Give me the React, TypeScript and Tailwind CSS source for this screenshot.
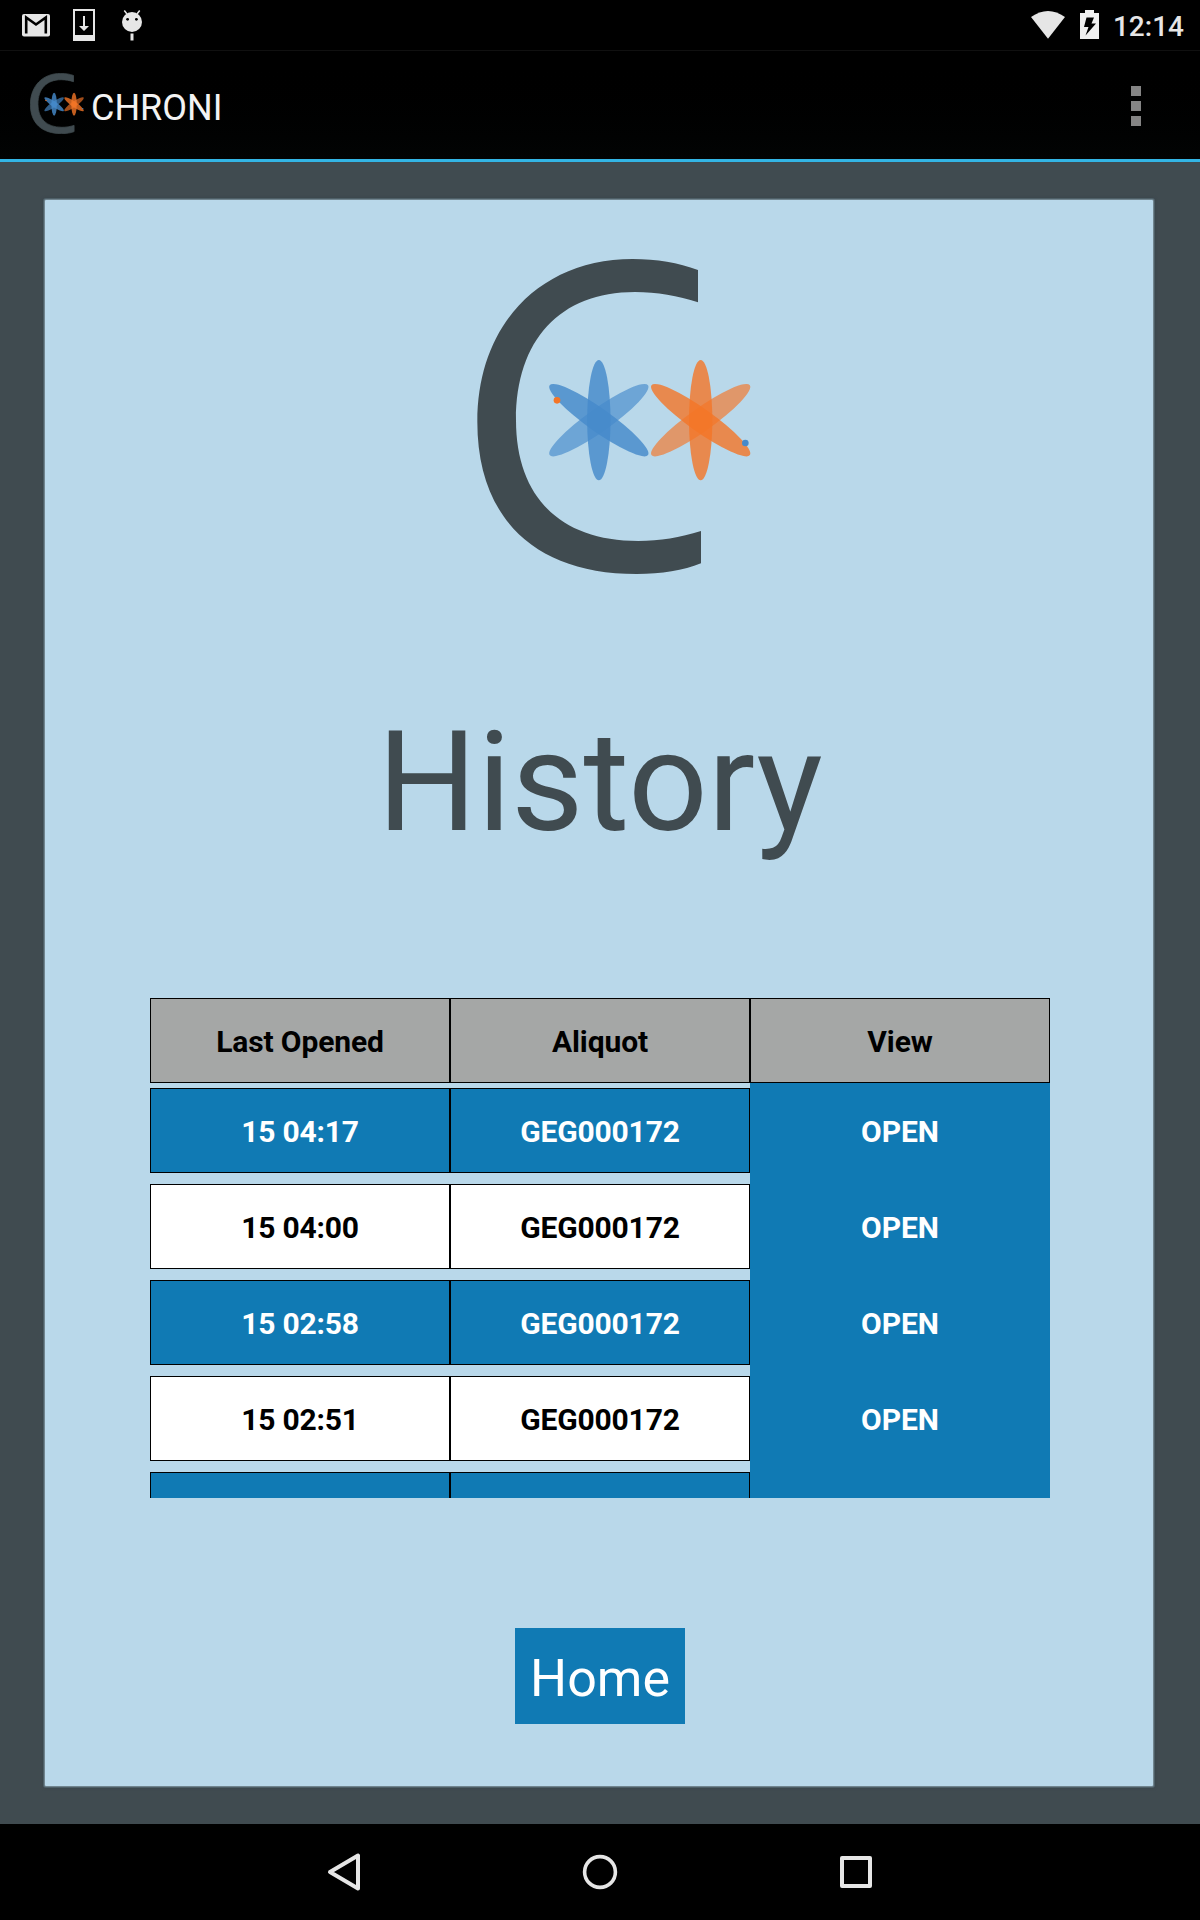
const rows = [
  { opened: "15 04:17", aliquot: "GEG000172" },
  { opened: "15 04:00", aliquot: "GEG000172" },
  { opened: "15 02:58", aliquot: "GEG000172" },
  { opened: "15 02:51", aliquot: "GEG000172" },
  { opened: "", aliquot: "" },
];

type FlowerProps = { cx: number; color: string; weak: number; strong: number; petal: number };

function Flower({ cx, color, weak, strong, petal }: FlowerProps) {
  return (
    <g fill={color}>
      <ellipse cx={cx} cy="540.5" rx="181" ry={petal} opacity={weak} transform={`rotate(-35.4 ${cx} 540.5)`} />
      <ellipse cx={cx} cy="540.5" rx="181" ry={petal} opacity={strong} transform={`rotate(35.4 ${cx} 540.5)`} />
      <ellipse cx={cx} cy="540.5" rx={petal} ry="180.5" opacity={strong} />
    </g>
  );
}

function Logo({ className, viewBox, bold = false }: { className: string; viewBox: string; bold?: boolean }) {
  const petal = bold ? 42 : 35;
  return (
    <svg className={className} viewBox={viewBox} preserveAspectRatio="none">
      <path
        fill="#404b50"
        stroke="#404b50"
        strokeWidth={bold ? 12 : 0}
        d="M714 90C655 68 590 57 518 57C240 57 52 255 52 545C52 835 225 1002 530 1002C605 1002 670 992 723 970V873C660 893 600 903 535 903C300 903 168 770 168 540C168 300 300 156 525 156C590 156 655 168 714 187Z"
      />
      <Flower cx={416.5} color="#468acb" weak={0.66} strong={0.82} petal={petal} />
      <Flower cx={722} color="#f47527" weak={0.66} strong={0.8} petal={petal} />
      <circle cx="291" cy="481" r="10" fill="#f47527" />
      <circle cx="856" cy="609" r="10" fill="#468acb" />
    </svg>
  );
}

function StatusBar() {
  return (
    <div className="flex h-[51px] shrink-0 items-start justify-between border-b border-[#101010] bg-black text-[#e6e6e6]">
      <svg className="h-[50px] w-[160px]" viewBox="0 0 160 50">
        <rect x="22" y="14" width="28" height="22.5" rx="2" fill="#e6e6e6" />
        <path d="M26.2 33.5V17.5L36 24.5L45.8 17.5V33.5" fill="none" stroke="#000" strokeWidth="2.6" />
        <rect x="74" y="10" width="20" height="30" fill="none" stroke="#e6e6e6" strokeWidth="2" />
        <path d="M73.5 35H95V40.5H73.5ZM83 16H85V26H89L84 31L79 26H83Z" fill="#e6e6e6" />
        <circle cx="132" cy="22" r="10" fill="#e6e6e6" />
        <path d="M127 14L124.3 10.5M137 14L139.7 10.5" stroke="#e6e6e6" strokeWidth="1.5" />
        <circle cx="127.6" cy="19.3" r="1.4" />
        <circle cx="136.4" cy="19.3" r="1.4" />
        <path d="M130.5 33.5H133.5V40.5H130.5Z" fill="#e6e6e6" />
      </svg>
      <div className="flex">
        <svg className="h-[50px] w-[93px]" viewBox="1020 0 93 50">
          <path d="M1031 17Q1048 5 1065 17L1048 38.7Z" fill="#e6e6e6" />
          <path d="M1085 10H1094V13H1099V39H1080V13H1085Z" fill="#f0f0f0" />
          <path d="M1086.5 17.5H1094L1091.5 23.5H1096L1085.5 35.5L1088.5 27H1084Z" fill="#000" />
        </svg>
        <div className="mt-[10px] mr-[16px] text-[28px] leading-[33px] font-medium">12:14</div>
      </div>
    </div>
  );
}

export default function App() {
  return (
    <div className="flex h-[1920px] w-[1200px] flex-col overflow-hidden bg-[#404b50] font-['Roboto',sans-serif]">
      <StatusBar />
      <header className="flex h-[111px] shrink-0 items-start border-b-[3px] border-[#33b5e5] bg-linear-to-b from-black to-[#020404] text-[#f3f3f3]">
        <Logo className="mt-[22px] ml-[30px] h-[61px] w-[54px]" viewBox="46 51 829 957" bold />
        <h1 className="mt-[36px] ml-[7px] text-[36px] leading-[42px]">CHRONI</h1>
        <div className="mt-[35px] mr-[59px] ml-auto flex flex-col gap-[5px]">
          <span className="size-[10px] bg-[#858585]" />
          <span className="size-[10px] bg-[#858585]" />
          <span className="size-[10px] bg-[#858585]" />
        </div>
      </header>

      <main className="mx-[45px] mt-[38px] flex h-[1586px] w-[1108px] shrink-0 flex-col items-center rounded-[1px] bg-[#b9d8ea] shadow-[0_0_0_1px_#71858f,0_0_0_2px_#4e5f67,0_0_3px_2px_#38444a]">
        <Logo className="mt-[40px] ml-[42px] h-[350px] w-[320px] shrink-0" viewBox="0 0 960 1050" />
        <h2 className="mt-[110px] ml-[2px] text-[140px] leading-[164px] text-[#404b50]">History</h2>
        <div className="mt-[134px] ml-[2px] w-[900px] text-center text-[30px] leading-[85px] font-bold">
          <div className="grid grid-cols-3 bg-[#a5a7a6] tracking-[-0.13px] text-black">
            <div className="h-[85px] border border-black">Last Opened</div>
            <div className="h-[85px] border border-black">Aliquot</div>
            <div className="h-[85px] border border-black">View</div>
          </div>
          <div className="h-[415px] overflow-hidden">
            {rows.map((row, i) => {
              const cell =
                i % 2 === 0
                  ? "mt-[5px] h-[85px] border border-black bg-[#107ab4] tracking-[-0.18px] text-white"
                  : "mt-[5px] h-[85px] border border-black bg-white tracking-[-0.18px] text-black";
              return (
                <div key={i} className="grid h-24 grid-cols-3">
                  <div className={cell}>{row.opened}</div>
                  <div className={cell}>{row.aliquot}</div>
                  <div className="bg-[#107ab4] pt-[6px] text-white">{row.opened && "OPEN"}</div>
                </div>
              );
            })}
          </div>
        </div>
        <button className="mt-[130px] ml-[2px] h-24 w-[170px] bg-[#107ab4] pt-[5px] text-[52px] text-white">Home</button>
      </main>

      <nav className="mt-auto flex h-24 shrink-0 items-center justify-center gap-[208px] bg-black">
        <svg className="size-12" viewBox="0 0 48 48" fill="none" stroke="#e6e6e6" strokeWidth="4" strokeLinejoin="round">
          <path d="M10 24L38 7.5V40.5Z" />
        </svg>
        <svg className="size-12" viewBox="0 0 48 48" fill="none" stroke="#e6e6e6" strokeWidth="3.6">
          <circle cx="24" cy="24" r="15.4" />
        </svg>
        <svg className="size-12" viewBox="0 0 48 48" fill="none" stroke="#e6e6e6" strokeWidth="4" strokeLinejoin="round">
          <rect x="10" y="10" width="28" height="28" />
        </svg>
      </nav>
    </div>
  );
}
